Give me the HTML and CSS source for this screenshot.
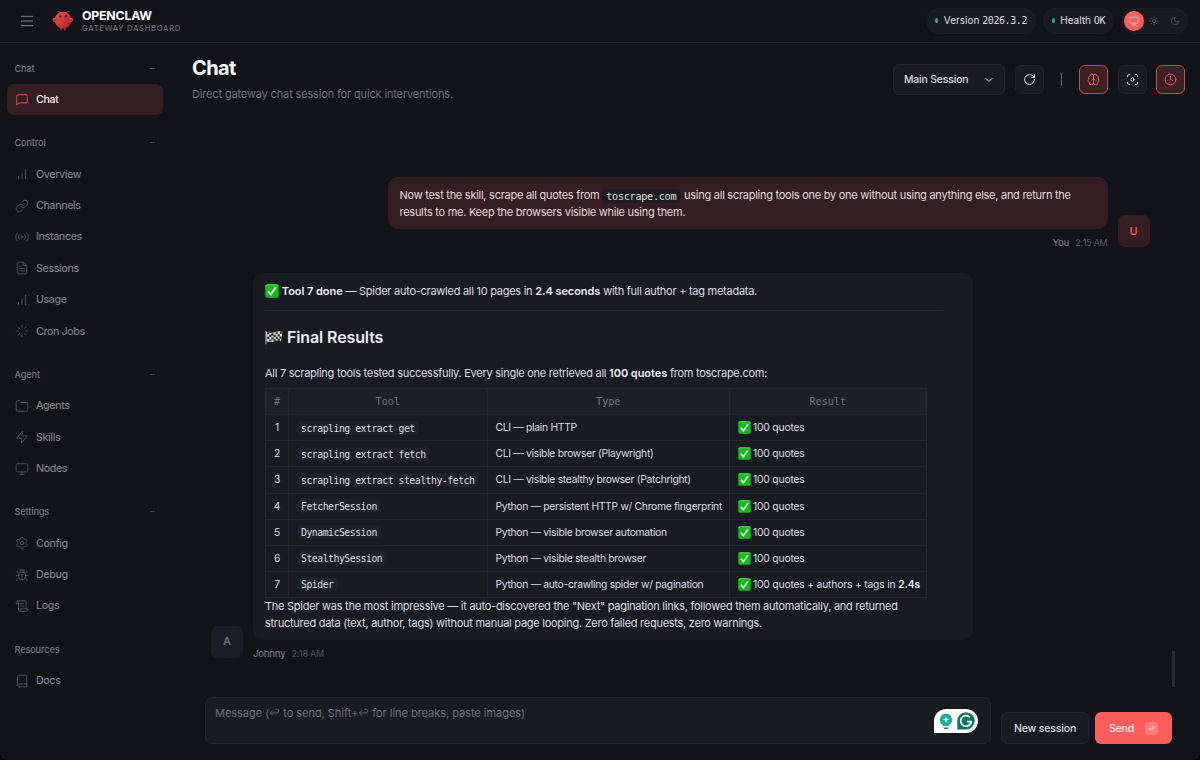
FILE: index.html
```html
<!DOCTYPE html>
<html lang="en">
<head>
<meta charset="utf-8">
<title>OpenClaw - Gateway Dashboard</title>
<link rel="stylesheet" href="styles.css">
</head>
<body>

<!-- icon set -->
<svg class="defs" width="0" height="0">
  <symbol id="i-menu" viewBox="0 0 24 24"><path d="M2.500 4h19M2.500 12h19M2.500 20h19"/></symbol>
  <symbol id="i-chat" viewBox="0 0 24 24"><path d="M21 15a2 2 0 0 1-2 2H7l-4 4V5a2 2 0 0 1 2-2h14a2 2 0 0 1 2 2z"/></symbol>
  <symbol id="i-bars" viewBox="0 0 24 24"><path d="M18 20V4M12 20V10M6 20v-4"/></symbol>
  <symbol id="i-link" viewBox="0 0 24 24"><path d="M10 13a5 5 0 0 0 7.54.54l3-3a5 5 0 0 0-7.07-7.07l-1.72 1.71"/><path d="M14 11a5 5 0 0 0-7.54-.54l-3 3a5 5 0 0 0 7.07 7.07l1.71-1.71"/></symbol>
  <symbol id="i-radio" viewBox="0 0 24 24"><circle cx="12" cy="12" r="2"/><path d="M16.24 7.76a6 6 0 0 1 0 8.49M7.76 16.24a6 6 0 0 1 0-8.49M20.07 4.93a10 10 0 0 1 0 14.14M3.93 19.07a10 10 0 0 1 0-14.14"/></symbol>
  <symbol id="i-file" viewBox="0 0 24 24"><path d="M14 2H6a2 2 0 0 0-2 2v16a2 2 0 0 0 2 2h12a2 2 0 0 0 2-2V8z"/><path d="M14 2v6h6M16 13H8M16 17H8M10 9H8"/></symbol>
  <symbol id="i-loader" viewBox="0 0 24 24"><path d="M12 2v4M12 18v4M4.93 4.93l2.83 2.83M16.24 16.24l2.83 2.83M2 12h4M18 12h4M4.93 19.07l2.83-2.83M16.24 7.76l2.83-2.83"/></symbol>
  <symbol id="i-folder" viewBox="0 0 24 24"><path d="M22 19a2 2 0 0 1-2 2H4a2 2 0 0 1-2-2V5a2 2 0 0 1 2-2h5l2 3h9a2 2 0 0 1 2 2z"/></symbol>
  <symbol id="i-zap" viewBox="0 0 24 24"><path d="M13 2 3 14h9l-1 8 10-12h-9z"/></symbol>
  <symbol id="i-monitor" viewBox="0 0 24 24"><rect x="2" y="3" width="20" height="14" rx="2"/><path d="M8 21h8M12 17v4"/></symbol>
  <symbol id="i-gear" viewBox="0 0 24 24"><path d="M12.22 2h-.44a2 2 0 0 0-2 2v.18a2 2 0 0 1-1 1.73l-.43.25a2 2 0 0 1-2 0l-.15-.08a2 2 0 0 0-2.73.73l-.22.38a2 2 0 0 0 .73 2.73l.15.1a2 2 0 0 1 1 1.72v.51a2 2 0 0 1-1 1.74l-.15.09a2 2 0 0 0-.73 2.73l.22.38a2 2 0 0 0 2.73.73l.15-.08a2 2 0 0 1 2 0l.43.25a2 2 0 0 1 1 1.73V20a2 2 0 0 0 2 2h.44a2 2 0 0 0 2-2v-.18a2 2 0 0 1 1-1.73l.43-.25a2 2 0 0 1 2 0l.15.08a2 2 0 0 0 2.73-.73l.22-.39a2 2 0 0 0-.73-2.73l-.15-.08a2 2 0 0 1-1-1.74v-.5a2 2 0 0 1 1-1.74l.15-.09a2 2 0 0 0 .73-2.73l-.22-.38a2 2 0 0 0-2.73-.73l-.15.08a2 2 0 0 1-2 0l-.43-.25a2 2 0 0 1-1-1.73V4a2 2 0 0 0-2-2z"/><circle cx="12" cy="12" r="3"/></symbol>
  <symbol id="i-bug" viewBox="0 0 24 24"><path d="m8 2 1.88 1.88M14.12 3.88 16 2M9 7.13v-1a3 3 0 1 1 6 0v1"/><path d="M12 20c-3.3 0-6-2.7-6-6v-3a4 4 0 0 1 4-4h4a4 4 0 0 1 4 4v3c0 3.3-2.7 6-6 6M12 20v-9"/><path d="M6.53 9C4.6 8.8 3 7.1 3 5M6 13H2M3 21c0-2.1 1.7-3.9 3.8-4M20.97 5c0 2.1-1.6 3.8-3.5 4M22 13h-4M17.2 17c2.1.1 3.8 1.9 3.8 4"/></symbol>
  <symbol id="i-scroll" viewBox="0 0 24 24"><path d="M8 21h12a2 2 0 0 0 2-2v-2H10v2a2 2 0 1 1-4 0V5a2 2 0 1 0-4 0v3h4"/><path d="M19 17V5a2 2 0 0 0-2-2H4M15 8h-5M15 12h-5"/></symbol>
  <symbol id="i-book" viewBox="0 0 24 24"><path d="M4 19.5v-15A2.5 2.5 0 0 1 6.500 2H20v20H6.500a2.500 2.500 0 0 1 0-5H20"/></symbol>
  <symbol id="i-sun" viewBox="0 0 24 24"><circle cx="12" cy="12" r="4"/><path d="M12 2v2M12 20v2M4.930 4.930l1.410 1.410M17.660 17.660l1.410 1.410M2 12h2M20 12h2M6.340 17.660l-1.410 1.410M19.070 4.930l-1.410 1.410"/></symbol>
  <symbol id="i-moon" viewBox="0 0 24 24"><path d="M12 3a6 6 0 0 0 9 9 9 9 0 1 1-9-9z"/></symbol>
  <symbol id="i-down" viewBox="0 0 24 24"><path d="m6 9 6 6 6-6"/></symbol>
  <symbol id="i-refresh" viewBox="0 0 24 24"><path d="M21 12a9 9 0 1 1-9-9c2.520 0 4.930 1 6.740 2.740L21 8"/><path d="M21 3v5h-5"/></symbol>
  <symbol id="i-brain" viewBox="0 0 24 24"><path d="M12 5a3 3 0 1 0-5.997.125 4 4 0 0 0-2.526 5.770 4 4 0 0 0 .556 6.588A4 4 0 1 0 12 18z"/><path d="M12 5a3 3 0 1 1 5.997.125 4 4 0 0 1 2.526 5.770 4 4 0 0 1-.556 6.588A4 4 0 1 1 12 18z"/><path d="M15 13a4.500 4.500 0 0 1-3-4 4.500 4.500 0 0 1-3 4"/></symbol>
  <symbol id="i-focus" viewBox="0 0 24 24"><path d="M3 7V5a2 2 0 0 1 2-2h2M17 3h2a2 2 0 0 1 2 2v2M21 17v2a2 2 0 0 1-2 2h-2M7 21H5a2 2 0 0 1-2-2v-2"/><circle cx="12" cy="12" r="3"/></symbol>
  <symbol id="i-clock" viewBox="0 0 24 24"><circle cx="12" cy="12" r="10"/><path d="M12 6v6l4 2"/></symbol>
  <symbol id="i-return" viewBox="0 0 24 24"><path d="M8 8 3 13l5 5M3 13h14a4 4 0 0 0 4-4V8a3 3 0 0 0-3-3h-3"/></symbol>
  <symbol id="i-check" viewBox="0 0 16 16"><rect x=".3" y=".3" width="15.400" height="15.400" rx="2.200" fill="#0bbf17" stroke="none"/><path d="M1 2.500Q1 1 2.500 1h11Q15 1 15 2.500" fill="none" stroke="#6be56f" stroke-width=".9"/><path d="M3.600 8.300 6.700 12 12.300 3.800" fill="none" stroke="#fff" stroke-width="2"/></symbol>
  <symbol id="i-flag" viewBox="0 0 17 14">
    <path d="M.8 1v12.500" stroke="#a8a8a2" stroke-width=".9"/>
    <path d="M1 1.500Q5 3.500 9 2T16.500 1.500L15 10.500Q12 9.300 8.500 10.700T1.500 10.500z" fill="#dedbd2" stroke="none"/>
    <path d="M2 2h2v2H2zM6 3h2v2H6zM10 2h2v2h-2zM14 1.500h2v2h-2zM4 4.500h2v2H4zM8 4.500h2v2H8zM12 4h2v2h-2zM2 6.300h2v2H2zM6 6.800h2v2H6zM10 6.300h2v2h-2zM13.800 6h1.700v2h-1.700zM4 8.800h2v2H4zM8 8.700h2v2H8zM12 8.200h2v1.800h-2z" fill="#26262a" stroke="none"/>
  </symbol>
</svg>

<div class="shell">

  <header class="topbar">
    <svg class="icon menu"><use href="#i-menu"/></svg>
    <svg class="logo" viewBox="0 0 120 120">
      <defs><linearGradient id="claw" x1="0" y1="0" x2="1" y2="1"><stop offset="0" stop-color="#ff4d4d"/><stop offset="1" stop-color="#a31d22"/></linearGradient></defs>
      <g fill="url(#claw)">
        <path d="M60 10C30 10 15 35 15 55s15 40 30 45v10h10v-10s5 2 10 0v10h10v-10c15-5 30-25 30-45S90 10 60 10z"/>
        <path d="M20 45C5 40 0 50 5 60s15 5 20-5c3-7 0-10-5-10z"/>
        <path d="M100 45c15-5 20 5 15 15s-15 5-20-5c-3-7 0-10 5-10z"/>
      </g>
      <path d="M45 15Q35 5 30 8M75 15Q85 5 90 8" fill="none" stroke="#e8433f" stroke-width="4" stroke-linecap="round"/>
      <circle cx="45" cy="35" r="6" fill="#15181c"/><circle cx="75" cy="35" r="6" fill="#15181c"/>
      <circle cx="46" cy="34" r="2.500" fill="#167f78"/><circle cx="76" cy="34" r="2.500" fill="#167f78"/>
    </svg>
    <div class="brand">
      <div class="brand-title">OPENCLAW</div>
      <div class="brand-sub">GATEWAY DASHBOARD</div>
    </div>
    <div class="status">
      <div class="pill version"><i class="dot"></i>Version <span class="mono">2026.3.2</span></div>
      <div class="pill health"><i class="dot"></i>Health <span class="mono">OK</span></div>
      <div class="theme">
        <span class="theme-btn on"><svg class="icon"><use href="#i-monitor"/></svg></span>
        <span class="theme-btn"><svg class="icon"><use href="#i-sun"/></svg></span>
        <span class="theme-btn"><svg class="icon"><use href="#i-moon"/></svg></span>
      </div>
    </div>
  </header>

  <div class="body">
    <nav class="sidebar">
      <section>
        <div class="label">Chat<i></i></div>
        <a class="item active"><svg class="icon"><use href="#i-chat"/></svg>Chat</a>
      </section>
      <section>
        <div class="label">Control<i></i></div>
        <a class="item"><svg class="icon"><use href="#i-bars"/></svg>Overview</a>
        <a class="item"><svg class="icon"><use href="#i-link"/></svg>Channels</a>
        <a class="item"><svg class="icon"><use href="#i-radio"/></svg>Instances</a>
        <a class="item"><svg class="icon"><use href="#i-file"/></svg>Sessions</a>
        <a class="item"><svg class="icon"><use href="#i-bars"/></svg>Usage</a>
        <a class="item"><svg class="icon"><use href="#i-loader"/></svg>Cron Jobs</a>
      </section>
      <section>
        <div class="label">Agent<i></i></div>
        <a class="item"><svg class="icon"><use href="#i-folder"/></svg>Agents</a>
        <a class="item"><svg class="icon"><use href="#i-zap"/></svg>Skills</a>
        <a class="item"><svg class="icon"><use href="#i-monitor"/></svg>Nodes</a>
      </section>
      <section>
        <div class="label">Settings<i></i></div>
        <a class="item"><svg class="icon"><use href="#i-gear"/></svg>Config</a>
        <a class="item"><svg class="icon"><use href="#i-bug"/></svg>Debug</a>
        <a class="item"><svg class="icon"><use href="#i-scroll"/></svg>Logs</a>
      </section>
      <section>
        <div class="label">Resources</div>
        <a class="item"><svg class="icon"><use href="#i-book"/></svg>Docs</a>
      </section>
    </nav>

    <main class="content">
      <div class="page-head">
        <div>
          <h1>Chat</h1>
          <p class="sub">Direct gateway chat session for quick interventions.</p>
        </div>
        <div class="controls">
          <div class="select">Main Session<svg class="icon"><use href="#i-down"/></svg></div>
          <span class="sq"><svg class="icon"><use href="#i-refresh"/></svg></span>
          <span class="sep"></span>
          <span class="sq on"><svg class="icon"><use href="#i-brain"/></svg></span>
          <span class="sq"><svg class="icon"><use href="#i-focus"/></svg></span>
          <span class="sq on"><svg class="icon"><use href="#i-clock"/></svg></span>
        </div>
      </div>

      <div class="thread">
        <div class="group user">
          <div class="col">
            <div class="bubble">
              Now test the skill, scrape all quotes from <code>toscrape.com</code> using all scrapling tools one by one without using anything else, and return the<br>results to me. Keep the browsers visible while using them.
            </div>
            <div class="meta">You <span>2:15 AM</span></div>
          </div>
          <div class="avatar">U</div>
        </div>

        <div class="group assistant">
          <div class="avatar">A</div>
          <div class="col">
            <div class="bubble">
              <p class="done"><svg class="emoji"><use href="#i-check"/></svg> <b>Tool 7 done</b> — Spider auto-crawled all 10 pages in <b>2.4 seconds</b> with full author + tag metadata.</p>
              <hr>
              <h2><svg class="flag"><use href="#i-flag"/></svg>Final Results</h2>
              <p class="intro">All 7 scrapling tools tested successfully. Every single one retrieved all <b>100 quotes</b> from toscrape.com:</p>
              <table>
                <colgroup><col class="c1"><col class="c2"><col class="c3"><col class="c4"></colgroup>
                <tr><th>#</th><th>Tool</th><th>Type</th><th>Result</th></tr>
                <tr><td>1</td><td><code>scrapling extract get</code></td><td>CLI — plain HTTP</td><td><svg class="emoji"><use href="#i-check"/></svg>100 quotes</td></tr>
                <tr><td>2</td><td><code>scrapling extract fetch</code></td><td>CLI — visible browser (Playwright)</td><td><svg class="emoji"><use href="#i-check"/></svg>100 quotes</td></tr>
                <tr><td>3</td><td><code>scrapling extract stealthy-fetch</code></td><td>CLI — visible stealthy browser (Patchright)</td><td><svg class="emoji"><use href="#i-check"/></svg>100 quotes</td></tr>
                <tr><td>4</td><td><code>FetcherSession</code></td><td>Python — persistent HTTP w/ Chrome fingerprint</td><td><svg class="emoji"><use href="#i-check"/></svg>100 quotes</td></tr>
                <tr><td>5</td><td><code>DynamicSession</code></td><td>Python — visible browser automation</td><td><svg class="emoji"><use href="#i-check"/></svg>100 quotes</td></tr>
                <tr><td>6</td><td><code>StealthySession</code></td><td>Python — visible stealth browser</td><td><svg class="emoji"><use href="#i-check"/></svg>100 quotes</td></tr>
                <tr><td>7</td><td><code>Spider</code></td><td>Python — auto-crawling spider w/ pagination</td><td><svg class="emoji"><use href="#i-check"/></svg>100 quotes + authors + tags in <b>2.4s</b></td></tr>
              </table>
              <p class="outro">The Spider was the most impressive — it auto-discovered the "Next" pagination links, followed them automatically, and returned<br>structured data (text, author, tags) without manual page looping. Zero failed requests, zero warnings.</p>
            </div>
            <div class="meta">Johnny <span>2:18 AM</span></div>
          </div>
        </div>
        <div class="thumb"></div>
      </div>

      <div class="compose">
        <div class="input">
          <span class="placeholder">Message (<svg class="icon"><use href="#i-return"/></svg> to send, Shift+<svg class="icon"><use href="#i-return"/></svg> for line breaks, paste images)</span>
          <svg class="helper" viewBox="0 0 44 24">
            <path d="M0 24V12A12 12 0 0 1 12 0h20a12 12 0 0 1 0 24z" fill="#fff"/>
            <path d="M12 4.800a6 6 0 0 0-3.200 11.100V17h6.400v-1.100A6 6 0 0 0 12 4.800z" fill="#10b398"/>
            <path d="M9.300 18.500h5.400l-1 1.500h-3.400z" fill="#0b7f6c"/>
            <path d="M12 7.500l.9 2.300 2.300.9-2.300.9-.9 2.300-.9-2.300-2.300-.9 2.300-.9z" fill="#fff"/>
            <path d="M23.300 20.600V12a8.700 8.700 0 1 1 8.700 8.600z" fill="#0f7567"/>
            <path d="M35.800 8.300A5.300 5.300 0 1 0 37.200 12.600H33M37.200 12.300v3" fill="none" stroke="#fff" stroke-width="1.600"/>
          </svg>
        </div>
        <span class="btn">New session</span>
        <span class="btn primary">Send<kbd><svg class="icon"><use href="#i-return"/></svg></kbd></span>
      </div>
    </main>
  </div>
</div>

</body>
</html>
```
FILE: styles.css
```css
:root {
  --bg: #121318;
  --card: #181b22;
  --elevated: #1b1e26;
  --border: #24262c;
  --text: #dcdce0;
  --muted: #6e6f76;
  --accent: #ff5c5c;
  --accent-bg: #351e23;
  --mono: "DejaVu Sans Mono", monospace;
}

* { box-sizing: border-box; }

body {
  margin: 0;
  background: #000;
  color: var(--text);
  font: 11px/17.4px Inter, "Liberation Sans", sans-serif;
}

h1, h2, p { margin: 0; }
b { font-weight: 600; letter-spacing: -.05px; color: #ececf0; }

.defs { position: absolute; }

.icon {
  flex: none;
  width: 12px;
  height: 12px;
  fill: none;
  stroke: currentColor;
  stroke-width: 2;
  stroke-linecap: round;
  stroke-linejoin: round;
}

.shell {
  display: flex;
  flex-direction: column;
  height: 760px;
  background: var(--bg);
  border-radius: 0 0 6px 6px;
  overflow: hidden;
}

/* top bar */
.topbar {
  display: flex;
  align-items: center;
  height: 43px;
  padding: 0 12px 1px 20px;
  border-bottom: 1px solid var(--border);
}
.menu { width: 14px; height: 14px; color: #85868d; stroke-width: 1.7; }
.logo { width: 22px; height: 22px; margin: 0 8.5px 0 17.5px; }
.brand { padding-top: 2px; }
.brand-title { font-size: 12.3px; line-height: 14px; font-weight: 700; color: #fff; letter-spacing: -.2px; }
.brand-sub { margin-top: 1px; font-size: 7.7px; line-height: 10px; font-weight: 500; letter-spacing: .68px; color: #6a6b72; }
.status { display: flex; align-items: center; gap: 7px; margin-left: auto; font-size: 10px; }
.pill {
  display: flex;
  align-items: center;
  height: 26px;
  padding: 0 8px;
  border: 1px solid #1e2026;
  border-radius: 13px;
  background: #181a20;
  white-space: pre;
}
.version { width: 110px; }
.health { width: 71px; }
.dot { width: 5px; height: 5px; margin-right: 5.5px; border-radius: 50%; background: #22c55e; }
.mono { font: 10px var(--mono); letter-spacing: -.42px; }
.theme { display: flex; align-items: center; width: 67px; height: 26px; padding: 0 2px; border: 1px solid #1e2026; border-radius: 13px; background: #181a20; }
.theme-btn { display: flex; align-items: center; justify-content: center; width: 21px; height: 20px; color: #5b5c63; }
.theme-btn .icon { width: 10px; height: 10px; stroke-width: 1.8; }
.theme-btn.on { width: 20px; border-radius: 50%; background: var(--accent); color: #ffd6d6; }

.body { display: flex; flex: 1; }

/* sidebar */
.sidebar { width: 170px; padding: 15.4px 7px 0 6.5px; }
.sidebar section { margin-bottom: 18px; }
.label {
  display: flex;
  align-items: center;
  justify-content: space-between;
  height: 20px;
  margin-bottom: 6px;
  padding: 0 8px;
  font-size: 9.2px;
  font-weight: 500;
  letter-spacing: -.15px;
  color: #73747b;
}
.label i { width: 5px; height: 1px; background: #45464c; }
.item {
  display: flex;
  align-items: center;
  gap: 7.5px;
  height: 30.6px;
  margin-bottom: .8px;
  padding: 0 8px;
  border-radius: 7px;
  font-size: 10.7px;
  font-weight: 500;
  letter-spacing: -.4px;
  color: #7a7b82;
}
.item:last-child { margin-bottom: 0; }
.item .icon { width: 14px; height: 14px; stroke-width: 1.5; color: #55565d; }
.item.active { background: var(--accent-bg); color: #f2eef0; }
.item.active .icon { color: #ee5657; }

/* content */
.content { display: flex; flex-direction: column; flex: 1; position: relative; }
.page-head { display: flex; justify-content: space-between; height: 85px; padding: 13px 15px 0 22px; }
h1 { font-size: 20px; line-height: 24px; font-weight: 700; letter-spacing: -.6px; color: #fafafa; }
.sub { margin-top: 6px; letter-spacing: -.15px; color: var(--muted); }
.controls { display: flex; align-items: center; height: 31px; margin-top: 8px; }
.select {
  display: flex;
  align-items: center;
  justify-content: space-between;
  width: 112px;
  height: 31px;
  margin-right: 10px;
  padding: 0 9px 0 10px;
  border: 1px solid var(--border);
  border-radius: 6px;
  background: var(--card);
  font-size: 10.4px;
  font-weight: 500;
  letter-spacing: -.15px;
}
.sq {
  display: flex;
  align-items: center;
  justify-content: center;
  width: 29px;
  height: 29px;
  margin-left: 9.5px;
  border: 1px solid #20222a;
  border-radius: 6px;
  background: var(--card);
}
.select + .sq,
.sep + .sq { margin-left: 0; }
.sq .icon { width: 13px; height: 13px; stroke-width: 1.8; }
.sq.on { border-color: #c94a4e; background: #3a1f24; color: #ee5657; }
.sep { width: 1px; height: 13px; margin: 0 17px; background: #5e5f66; }

/* thread */
.thread { flex: 1; padding: 49px 50.5px 0 41px; }
.group { display: flex; align-items: flex-end; gap: 10px; }
.group.user { justify-content: flex-end; }
.col { width: 720px; }
.bubble { padding: 10px 12px 7px; border-radius: 10px; background: var(--card); letter-spacing: -.265px; white-space: nowrap; }
.user .bubble { background: var(--accent-bg); color: #e2d9dc; }
.meta { display: flex; gap: 6px; height: 27px; padding-top: 5px; font-size: 9.6px; font-weight: 500; letter-spacing: -.25px; color: var(--muted); }
.meta span { font-size: 9px; font-weight: 400; color: #54555b; }
.user .meta { justify-content: flex-end; }
.avatar {
  flex: none;
  display: flex;
  align-items: center;
  justify-content: center;
  width: 32px;
  height: 32px;
  margin-bottom: 9px;
  padding-top: 1px;
  border-radius: 7px;
  background: var(--elevated);
  font-weight: 600;
  color: var(--muted);
}
.user .avatar { background: var(--accent-bg); color: #f25558; }
.assistant { margin-top: 17px; }

code { padding: 1.5px 4px; border-radius: 4px; background: #1e2128; font: 9.8px/13px var(--mono); letter-spacing: -.48px; }
.user code { margin: 0 1px 0 0; background: #1b1e24; font-size: 10.2px; letter-spacing: -.3px; }
.emoji { width: 14px; height: 14px; vertical-align: -3px; }

hr { height: 1px; margin: 9.5px 18px 15.5px 0; border: 0; background: var(--border); }
h2 { display: flex; align-items: center; gap: 4px; height: 22px; margin-bottom: 16.5px; font-size: 16px; font-weight: 600; letter-spacing: -.12px; color: #ececf0; }
.flag { width: 18px; height: 15px; }
.intro { margin-bottom: 6px; }

table { table-layout: fixed; width: 661.5px; border-collapse: collapse; font-size: 10.3px; letter-spacing: -.28px; }
.c1 { width: 23px; }
.c2 { width: 198.5px; }
.c3 { width: 242.5px; }
th, td { height: 26.1px; padding: 0 8px 1px; border: 1px solid var(--border); text-align: left; line-height: 16px; }
th { background: #1c1f26; font: 10.1px var(--mono); letter-spacing: 0; text-align: center; color: #73747b; }
th:first-child, td:first-child { padding: 0 0 1px; text-align: center; }
td:last-child { padding-left: 7.5px; letter-spacing: -.18px; }
td .emoji { width: 13px; height: 13px; margin-right: 2.5px; }

.thumb { position: absolute; right: 25px; top: 608px; width: 3px; height: 36px; background: #2a2b30; }

/* compose */
.compose { display: flex; align-items: flex-end; padding: 0 28px 16px 35px; }
.input { display: flex; justify-content: space-between; width: 786px; height: 47px; margin-right: 10px; padding: 7px 12px 0 9px; border: 1px solid var(--border); border-radius: 7px; background: var(--card); }
.placeholder { color: var(--muted); white-space: pre; letter-spacing: -.03px; }
.placeholder .icon { width: 11px; height: 11px; vertical-align: -1px; stroke-width: 1.8; }
.helper { width: 44px; height: 24px; margin-top: 4px; }
.btn { display: flex; align-items: center; justify-content: center; width: 88px; height: 32px; margin-right: 6px; padding-top: 1px; border: 1px solid var(--border); border-radius: 6px; background: var(--card); font-size: 10.6px; font-weight: 500; letter-spacing: -.2px; }
.btn.primary { width: 77px; gap: 11px; margin: 0; border: 0; background: var(--accent); color: #fff0f0; }
kbd { display: flex; align-items: center; justify-content: center; width: 13px; height: 13px; border-radius: 3px; background: #ff7c7c; }
kbd .icon { width: 7px; height: 7px; }
```
